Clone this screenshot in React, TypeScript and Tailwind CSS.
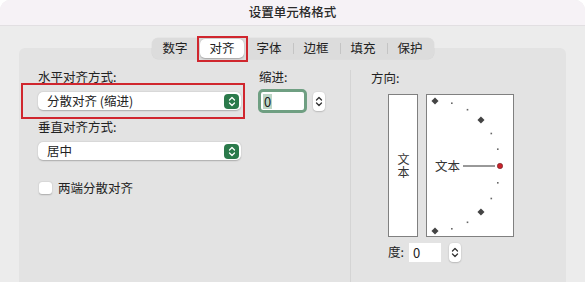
import React from "react";

const TABS = ["数字", "对齐", "字体", "边框", "填充", "保护"];

const Chevrons = ({ color = "#fff" }: { color?: string }) => (
  <svg width="8" height="11" viewBox="0 0 8 11" fill="none">
    <path d="M1.5 4 L4 1.5 L6.5 4" stroke={color} strokeWidth="1.3" strokeLinecap="round" strokeLinejoin="round" />
    <path d="M1.5 7 L4 9.5 L6.5 7" stroke={color} strokeWidth="1.3" strokeLinecap="round" strokeLinejoin="round" />
  </svg>
);

const Stepper = () => (
  <div className="w-[12px] h-[19px] rounded-[4px] bg-white shadow-[0_0.5px_1.5px_rgba(0,0,0,0.3)] flex items-center justify-center">
    <Chevrons color="#333" />
  </div>
);

const Select = ({ value }: { value: string }) => (
  <div className="w-[203px] h-[18px] rounded-[5px] bg-white shadow-[0_0.5px_1.5px_rgba(0,0,0,0.25)] flex items-center justify-between pl-[9px] pr-[2px]">
    <span className="text-[12.5px] leading-none text-[#222]">{value}</span>
    <div className="w-[15px] h-[15px] rounded-[4px] bg-[#2b7a4b] flex items-center justify-center">
      <Chevrons />
    </div>
  </div>
);

const Dial = () => {
  const cx = 9;
  const cy = 72;
  const r = 65;
  const pts = [];
  for (let a = -90; a <= 90; a += 15) {
    const rad = (a * Math.PI) / 180;
    const x = cx + r * Math.cos(rad);
    const y = cy - r * Math.sin(rad);
    if (a === 0) {
      pts.push(<circle key={a} cx={x} cy={y} r="2.7" fill="#c8232c" stroke="#5a1a1a" strokeWidth="0.5" />);
    } else if (Math.abs(a) === 90 || Math.abs(a) === 45) {
      pts.push(
        <rect key={a} x={x - 2.5} y={y - 2.5} width="5" height="5" fill="#444" transform={`rotate(45 ${x} ${y})`} />
      );
    } else {
      pts.push(<rect key={a} x={x - 0.8} y={y - 0.8} width="1.6" height="1.6" fill="#666" />);
    }
  }
  return (
    <svg width="86" height="141" viewBox="1 1 86 141">
      {pts}
      <line x1="37" y1="72" x2="69" y2="72" stroke="#333" strokeWidth="1" />
      <text x="9" y="77" fontSize="12.5" fill="#333" fontFamily="'Noto Sans CJK SC', sans-serif">
        文本
      </text>
    </svg>
  );
};

export default function App() {
  return (
    <div
      className="w-[585px] h-[282px] overflow-hidden bg-[#ececec] rounded-t-[10px] flex flex-col text-[#222]"
      style={{ fontFamily: "'Noto Sans CJK SC', 'Noto Sans', sans-serif" }}
    >
      <div className="h-[26px] shrink-0 bg-[#f6f2f6] border-b border-[#e2dfe2] flex items-center justify-center">
        <span className="text-[12.5px] font-medium text-[#2a2a2a]">设置单元格格式</span>
      </div>

      <div className="flex-1 flex flex-col items-center pt-[12px]">
        <div className="relative z-10 h-[21px] w-[282px] mb-[-11px] rounded-[6px] bg-[#dcdcdc] shadow-[0_0_0_0.5px_rgba(0,0,0,0.05)] flex">
          {TABS.map((t, i) => {
            const sel = i === 1;
            const divider = i >= 3;
            return (
              <div key={t} className="relative w-[47px] h-full flex items-center justify-center">
                {divider && <div className="absolute left-0 top-[5px] h-[11px] w-px bg-[#c4c4c4]" />}
                {sel ? (
                  <div className="relative w-[44px] h-[19px] rounded-[5px] bg-white shadow-[0_0.5px_1.5px_rgba(0,0,0,0.25)] flex items-center justify-center">
                    <span className="text-[12.5px] leading-none">{t}</span>
                    <div className="absolute -left-[3px] -right-[4px] -top-[3px] -bottom-[4px] border-2 border-[#d0262e]" />
                  </div>
                ) : (
                  <span className="text-[12.5px] leading-none">{t}</span>
                )}
              </div>
            );
          })}
        </div>

        <div className="w-[547px] flex-1 rounded-t-[6px] bg-[#e3e3e3] flex">
          <div className="w-[331px] shrink-0 pl-[19px] pt-[21px] flex">
            <div className="w-[203px] flex flex-col">
              <div className="h-[16px] text-[12.5px] leading-[16px]">水平对齐方式:</div>
              <div className="relative mt-[7px]">
                <Select value="分散对齐 (缩进)" />
                <div className="absolute -left-[17px] -right-[4px] -top-[9px] -bottom-[9px] border-2 border-[#d0262e]" />
              </div>
              <div className="h-[16px] mt-[9px] text-[12.5px] leading-[16px]">垂直对齐方式:</div>
              <div className="mt-[7px]">
                <Select value="居中" />
              </div>
              <div className="mt-[22px] flex items-center">
                <div className="ml-[1px] w-[13px] h-[12px] rounded-[3px] bg-white shadow-[0_0.5px_1.5px_rgba(0,0,0,0.25)]" />
                <span className="ml-[6px] text-[12.5px] leading-none">两端分散对齐</span>
              </div>
            </div>

            <div className="ml-[17px] flex flex-col">
              <div className="ml-[1px] h-[16px] text-[12.5px] leading-[16px]">缩进:</div>
              <div className="mt-[4px] flex items-center">
                <div className="w-[49px] h-[24px] rounded-[5px] border-[3px] border-[#6f9f82] bg-white flex items-center pl-[2px]">
                  <span className="px-[1px] bg-[#bcd5c5] text-[13px] leading-[15px] text-[#1a1a1a]">0</span>
                </div>
                <div className="ml-[6px]">
                  <Stepper />
                </div>
              </div>
            </div>
          </div>

          <div className="mt-[22px] w-px self-stretch bg-[#d4d4d4]" />

          <div className="pl-[20px] pt-[22px] flex flex-col">
            <div className="h-[16px] text-[12.5px] leading-[16px]">方向:</div>
            <div className="ml-[17px] mt-[8px] flex gap-[8px]">
              <div className="w-[30px] h-[143px] bg-white border border-[#808080] flex items-center justify-center">
                <span className="[writing-mode:vertical-rl] text-[12px] leading-none tracking-[1px] text-[#333]">文本</span>
              </div>
              <div className="w-[88px] h-[143px] bg-white border border-[#808080]">
                <Dial />
              </div>
            </div>
            <div className="ml-[17px] mt-[6px] flex items-center">
              <span className="text-[12.5px] leading-none">度:</span>
              <div className="ml-[5px] w-[32px] h-[19px] bg-white flex items-center pl-[4px]">
                <span className="text-[13px] leading-none">0</span>
              </div>
              <div className="ml-[8px]">
                <Stepper />
              </div>
            </div>
          </div>
        </div>
      </div>
    </div>
  );
}
